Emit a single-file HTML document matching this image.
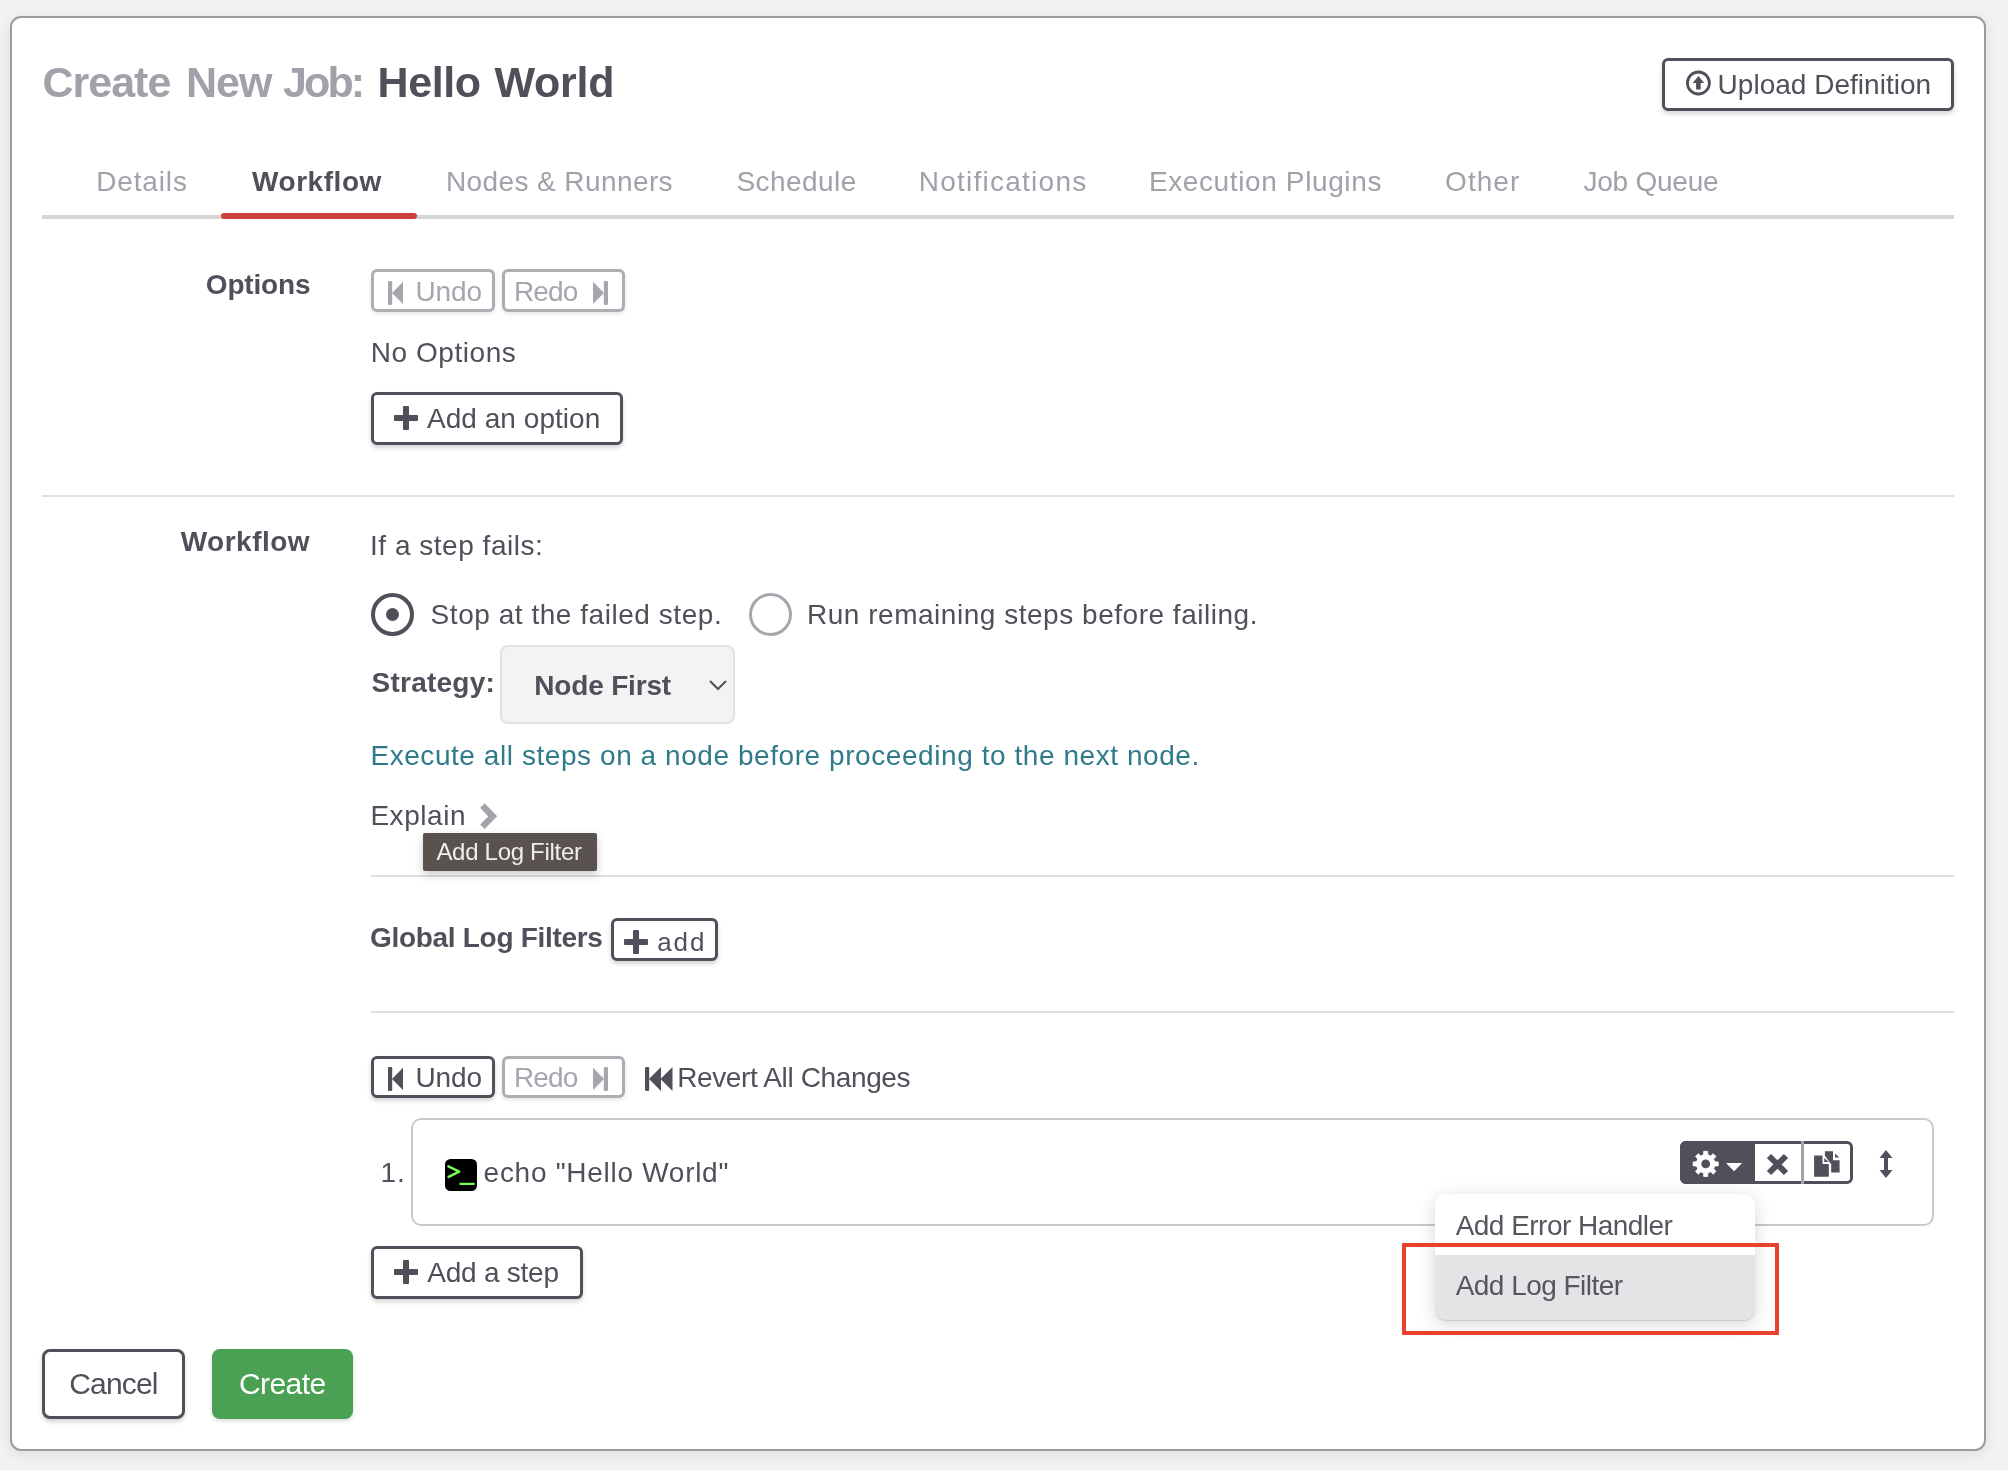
<!DOCTYPE html>
<html><head><meta charset="utf-8"><title>Create New Job</title><style>
*{box-sizing:border-box;margin:0;padding:0}
html,body{width:2008px;height:1470px;overflow:hidden;background:#f2f2f3;font-family:"Liberation Sans",sans-serif}
.t{position:absolute;white-space:pre;line-height:1}
.a{position:absolute}
.card{position:absolute;left:10px;top:16px;width:1976px;height:1435px;border:2px solid #9a9aa2;border-radius:11px;background:#fff;box-shadow:0 3px 14px rgba(0,0,0,.09)}
.btn{position:absolute;border:3px solid #4f5059;border-radius:6px;background:#fff;box-shadow:0 3px 4px rgba(0,0,0,.16)}
.btnd{position:absolute;border:3px solid #adadb3;border-radius:6px;background:#fff;box-shadow:0 2px 4px rgba(0,0,0,.10)}
.sep{position:absolute;height:2px;background:#e0e0e3}
</style></head>
<body>
<div class="card"></div>
<div class="btn" style="left:1662px;top:58px;width:292px;height:53px;"></div>
<svg class="a" style="left:1685px;top:70px" width="27" height="27" viewBox="0 0 27 27"><circle cx="13.4" cy="13.0" r="11" fill="none" stroke="#4f5059" stroke-width="2.8"/><path d="M13.4 5.9 L19.1 12.9 L15.7 12.9 L15.7 19.5 L11.1 19.5 L11.1 12.9 L7.7 12.9 Z" fill="#4f5059"/></svg>
<div class="a" style="left:42px;top:215px;width:1912px;height:4px;background:#d5d5d6"></div>
<div class="a" style="left:221px;top:213px;width:196px;height:6px;background:#cf403b;border-radius:3px"></div>
<div class="btnd" style="left:371px;top:269px;width:124px;height:43px;"></div>
<div class="btnd" style="left:502px;top:269px;width:123px;height:43px;"></div>
<svg class="a" style="left:388px;top:281px" width="16" height="24" viewBox="0 0 16 24"><rect x="0" y="0" width="4.2" height="24" rx="1.3" fill="#a6a7ae"/><path d="M15 0.8 L15 23 L4 11.9 Z" fill="#a6a7ae"/></svg>
<svg class="a" style="left:592px;top:281px" width="16" height="24" viewBox="0 0 16 24"><rect x="11.8" y="0" width="4.2" height="24" rx="1.3" fill="#a6a7ae"/><path d="M1 0.8 L1 23 L12 11.9 Z" fill="#a6a7ae"/></svg>
<div class="btn" style="left:371px;top:392px;width:252px;height:53px;"></div>
<svg class="a" style="left:394px;top:406px" width="24" height="24" viewBox="0 0 24 24"><rect x="9.0" y="0" width="6" height="24" rx="1" fill="#4f5059"/><rect x="0" y="9.0" width="24" height="6" rx="1" fill="#4f5059"/></svg>
<div class="sep" style="left:42px;top:495px;width:1912px;height:2px;"></div>
<div class="a" style="left:371px;top:593px;width:43px;height:43px;border:4.2px solid #4f5059;border-radius:50%"></div>
<div class="a" style="left:386px;top:607.6px;width:13.4px;height:13.4px;background:#4f5059;border-radius:50%"></div>
<div class="a" style="left:749px;top:593px;width:43px;height:43px;border:3.6px solid #a6a7ae;border-radius:50%"></div>
<div class="a" style="left:500px;top:645px;width:235px;height:79px;background:#f3f3f3;border:2px solid #e2e2e5;border-radius:8px"></div>
<svg class="a" style="left:708px;top:678px" width="20" height="14" viewBox="0 0 20 14"><path d="M2 3 L10 11 L18 3" fill="none" stroke="#4f5059" stroke-width="2"/></svg>
<svg class="a" style="left:479px;top:803px" width="20" height="27" viewBox="0 0 20 27"><path d="M5.6 0.3 L18.2 13.2 L5.6 25.9 L1.1 21.5 L9.2 13.4 L1.2 4.8 Z" fill="#a2a3ab"/></svg>
<div class="sep" style="left:371px;top:875px;width:1583px;height:2px;"></div>
<div class="btn" style="left:611px;top:918px;width:107px;height:43px;"></div>
<svg class="a" style="left:624px;top:930px" width="24" height="24" viewBox="0 0 24 24"><rect x="9.0" y="0" width="6" height="24" rx="1" fill="#4f5059"/><rect x="0" y="9.0" width="24" height="6" rx="1" fill="#4f5059"/></svg>
<div class="sep" style="left:371px;top:1011px;width:1583px;height:2px;"></div>
<div class="btn" style="left:371px;top:1056px;width:124px;height:42px;"></div>
<div class="btnd" style="left:502px;top:1056px;width:123px;height:42px;"></div>
<svg class="a" style="left:388px;top:1067px" width="16" height="24" viewBox="0 0 16 24"><rect x="0" y="0" width="4.2" height="24" rx="1.3" fill="#4f5059"/><path d="M15 0.8 L15 23 L4 11.9 Z" fill="#4f5059"/></svg>
<svg class="a" style="left:592px;top:1067px" width="16" height="24" viewBox="0 0 16 24"><rect x="11.8" y="0" width="4.2" height="24" rx="1.3" fill="#a6a7ae"/><path d="M1 0.8 L1 23 L12 11.9 Z" fill="#a6a7ae"/></svg>
<svg class="a" style="left:645px;top:1067px" width="28" height="24" viewBox="0 0 28 24"><rect x="0" y="0" width="4.2" height="24" rx="1.3" fill="#4f5059"/><path d="M16 0 L16 24 L4 12 Z" fill="#4f5059"/><path d="M27.5 0 L27.5 24 L15.5 12 Z" fill="#4f5059"/></svg>
<div class="a" style="left:411px;top:1118px;width:1523px;height:108px;border:2px solid #cbcbc5;border-radius:10px;background:#fff"></div>
<svg class="a" style="left:445px;top:1159px" width="32" height="32" viewBox="0 0 32 32"><rect x="0" y="0" width="32" height="32" rx="5.5" fill="#000"/><path d="M3.4 7.4 L14.2 12.6 L3.6 17.9" fill="none" stroke="#79fb56" stroke-width="2.5" stroke-linecap="round" stroke-linejoin="round"/><path d="M15.3 24.9 L28.8 24.9" stroke="#79fb56" stroke-width="2.2" stroke-linecap="round"/></svg>
<div class="a" style="left:1680px;top:1141px;width:173px;height:43px;border:3px solid #4f5059;border-radius:6px;background:#fff"></div>
<div class="a" style="left:1680px;top:1141px;width:75px;height:43px;background:#4f5059;border-radius:6px 0 0 6px"></div>
<div class="a" style="left:1801px;top:1141px;width:3px;height:43px;background:#a3a4ab"></div>
<svg class="a" style="left:1692px;top:1150px" width="28" height="28" viewBox="0 0 28 28"><path d="M10.22 5.28 L11.61 4.84 L11.71 1.36 L15.69 1.36 L15.79 4.84 L17.33 5.34 L18.63 6.01 L21.16 3.63 L23.97 6.44 L21.59 8.97 L22.32 10.42 L22.76 11.81 L26.24 11.91 L26.24 15.89 L22.76 15.99 L22.26 17.53 L21.59 18.83 L23.97 21.36 L21.16 24.17 L18.63 21.79 L17.18 22.52 L15.79 22.96 L15.69 26.44 L11.71 26.44 L11.61 22.96 L10.07 22.46 L8.77 21.79 L6.24 24.17 L3.43 21.36 L5.81 18.83 L5.08 17.38 L4.64 15.99 L1.16 15.89 L1.16 11.91 L4.64 11.81 L5.14 10.27 L5.81 8.97 L3.43 6.44 L6.24 3.63 L8.77 6.01 Z" fill="#fff" stroke="#fff" stroke-width="0.8" stroke-linejoin="round"/><circle cx="13.7" cy="13.9" r="4.4" fill="#4f5059"/></svg>
<svg class="a" style="left:1726px;top:1163px" width="17" height="9" viewBox="0 0 17 9"><path d="M0 0 L16.2 0 L8.1 8.2 Z" fill="#fff"/></svg>
<svg class="a" style="left:1765px;top:1152px" width="25" height="25" viewBox="0 0 25 25"><path d="M4 4 L21 21 M21 4 L4 21" stroke="#4f5059" stroke-width="6"/></svg>
<svg class="a" style="left:1810px;top:1148px" width="34" height="32" viewBox="0 0 34 32"><path d="M14.9 3.2 L23.0 3.2 L23.0 12.2 L29.6 12.2 L29.6 24.5 L21.2 24.5 L21.2 16.2 L14.9 7.8 Z M25.0 5.4 L29.3 9.4 L25.0 9.4 Z M4.1 7.5 L12.5 7.5 L12.5 16.1 L18.8 16.1 L18.8 28.8 L4.1 28.8 Z M14.3 10.0 L18.7 13.9 L14.3 13.9 Z" fill="#4f5059"/></svg>
<svg class="a" style="left:1879px;top:1150px" width="14" height="28" viewBox="0 0 14 28"><path d="M7 0 L13.5 8 L9 8 L9 20 L13.5 20 L7 28 L0.5 20 L5 20 L5 8 L0.5 8 Z" fill="#4f5059"/></svg>
<div class="btn" style="left:371px;top:1246px;width:212px;height:53px;"></div>
<svg class="a" style="left:394px;top:1260px" width="24" height="24" viewBox="0 0 24 24"><rect x="9.0" y="0" width="6" height="24" rx="1" fill="#4f5059"/><rect x="0" y="9.0" width="24" height="6" rx="1" fill="#4f5059"/></svg>
<div class="a" style="left:1435px;top:1194px;width:320px;height:126px;background:#fff;border-radius:10px;box-shadow:0 4px 18px rgba(0,0,0,.16);overflow:hidden"></div>
<div class="a" style="left:1435px;top:1255px;width:320px;height:64px;background:#e4e4e7;border-radius:0 0 10px 10px;box-shadow:0 2px 1px rgba(0,0,0,.12)"></div>
<div class="a" style="left:423px;top:833px;width:174px;height:38px;background:#59524f;border-radius:2px;box-shadow:0 4px 10px rgba(0,0,0,.2)"></div>
<div class="btn" style="left:42px;top:1349px;width:143px;height:70px;border-radius:8px"></div>
<div class="a" style="left:212px;top:1349px;width:141px;height:70px;background:#4ba153;border-radius:8px;box-shadow:0 2px 4px rgba(0,0,0,.14)"></div>
<div style="position:absolute;left:0;top:0;width:2008px;height:1470px;will-change:transform">
<div class="t" style="left:42.40px;top:61.05px;font-size:43px;font-weight:700;color:#a0a1a9;letter-spacing:-0.987px;">Create</div>
<div class="t" style="left:186.00px;top:61.05px;font-size:43px;font-weight:700;color:#a0a1a9;letter-spacing:-0.934px;">New</div>
<div class="t" style="left:283.00px;top:61.05px;font-size:43px;font-weight:700;color:#a0a1a9;letter-spacing:-2.882px;">Job:</div>
<div class="t" style="left:377.60px;top:61.05px;font-size:43px;font-weight:700;color:#4f5059;letter-spacing:-0.440px;">Hello</div>
<div class="t" style="left:494.60px;top:61.05px;font-size:43px;font-weight:700;color:#4f5059;letter-spacing:-0.289px;">World</div>
<div class="t" style="left:1717.60px;top:71.15px;font-size:28px;font-weight:400;color:#4f5059;letter-spacing:0.015px;">Upload Definition</div>
<div class="t" style="left:96.20px;top:167.95px;font-size:28px;font-weight:400;color:#a0a1a9;letter-spacing:0.852px;">Details</div>
<div class="t" style="left:252.00px;top:167.95px;font-size:28px;font-weight:700;color:#4f5059;letter-spacing:0.557px;">Workflow</div>
<div class="t" style="left:446.00px;top:167.95px;font-size:28px;font-weight:400;color:#a0a1a9;letter-spacing:0.400px;">Nodes &amp; Runners</div>
<div class="t" style="left:736.40px;top:167.95px;font-size:28px;font-weight:400;color:#a0a1a9;letter-spacing:0.445px;">Schedule</div>
<div class="t" style="left:918.80px;top:167.95px;font-size:28px;font-weight:400;color:#a0a1a9;letter-spacing:1.241px;">Notifications</div>
<div class="t" style="left:1148.90px;top:167.95px;font-size:28px;font-weight:400;color:#a0a1a9;letter-spacing:0.620px;">Execution Plugins</div>
<div class="t" style="left:1445.10px;top:167.95px;font-size:28px;font-weight:400;color:#a0a1a9;letter-spacing:1.049px;">Other</div>
<div class="t" style="left:1583.50px;top:167.95px;font-size:28px;font-weight:400;color:#a0a1a9;letter-spacing:-0.240px;">Job Queue</div>
<div class="t" style="left:205.80px;top:270.55px;font-size:28px;font-weight:700;color:#4f5059;letter-spacing:-0.182px;">Options</div>
<div class="t" style="left:415.50px;top:278.45px;font-size:28px;font-weight:400;color:#a6a7ae;letter-spacing:-0.155px;">Undo</div>
<div class="t" style="left:514.00px;top:278.45px;font-size:28px;font-weight:400;color:#a6a7ae;letter-spacing:-0.888px;">Redo</div>
<div class="t" style="left:370.80px;top:339.05px;font-size:28px;font-weight:400;color:#4f5059;letter-spacing:0.548px;">No Options</div>
<div class="t" style="left:427.00px;top:405.25px;font-size:28px;font-weight:400;color:#4f5059;letter-spacing:0.038px;">Add an option</div>
<div class="t" style="left:180.70px;top:528.45px;font-size:28px;font-weight:700;color:#4f5059;letter-spacing:0.486px;">Workflow</div>
<div class="t" style="left:370.00px;top:531.75px;font-size:28px;font-weight:400;color:#4f5059;letter-spacing:0.521px;">If a step fails:</div>
<div class="t" style="left:430.60px;top:601.05px;font-size:28px;font-weight:400;color:#4f5059;letter-spacing:0.541px;">Stop at the failed step.</div>
<div class="t" style="left:807.00px;top:601.05px;font-size:28px;font-weight:400;color:#4f5059;letter-spacing:0.523px;">Run remaining steps before failing.</div>
<div class="t" style="left:371.60px;top:669.15px;font-size:28px;font-weight:700;color:#4f5059;letter-spacing:0.232px;">Strategy:</div>
<div class="t" style="left:534.30px;top:671.75px;font-size:28px;font-weight:700;color:#4f5059;letter-spacing:-0.181px;">Node First</div>
<div class="t" style="left:370.40px;top:742.05px;font-size:28px;font-weight:400;color:#2f7b8b;letter-spacing:0.564px;">Execute all steps on a node before proceeding to the next node.</div>
<div class="t" style="left:370.40px;top:802.25px;font-size:28px;font-weight:400;color:#4f5059;letter-spacing:0.556px;">Explain</div>
<div class="t" style="left:436.40px;top:840.25px;font-size:24px;font-weight:400;color:#eeeeee;letter-spacing:-0.294px;">Add Log Filter</div>
<div class="t" style="left:370.00px;top:923.95px;font-size:28px;font-weight:700;color:#4f5059;letter-spacing:-0.302px;">Global Log Filters</div>
<div class="t" style="left:657.20px;top:928.65px;font-size:26px;font-weight:400;color:#4f5059;letter-spacing:1.940px;">add</div>
<div class="t" style="left:415.50px;top:1063.95px;font-size:28px;font-weight:400;color:#4f5059;letter-spacing:-0.155px;">Undo</div>
<div class="t" style="left:514.00px;top:1063.95px;font-size:28px;font-weight:400;color:#a6a7ae;letter-spacing:-0.888px;">Redo</div>
<div class="t" style="left:677.20px;top:1063.75px;font-size:28px;font-weight:400;color:#4f5059;letter-spacing:-0.372px;">Revert All Changes</div>
<div class="t" style="left:380.60px;top:1159.15px;font-size:28px;font-weight:400;color:#4f5059;letter-spacing:0.828px;">1.</div>
<div class="t" style="left:483.60px;top:1159.15px;font-size:28px;font-weight:400;color:#4f5059;letter-spacing:0.716px;">echo &quot;Hello World&quot;</div>
<div class="t" style="left:427.30px;top:1258.85px;font-size:28px;font-weight:400;color:#4f5059;letter-spacing:-0.245px;">Add a step</div>
<div class="t" style="left:1455.70px;top:1211.55px;font-size:28px;font-weight:400;color:#55565e;letter-spacing:-0.533px;">Add Error Handler</div>
<div class="t" style="left:1455.70px;top:1272.35px;font-size:28px;font-weight:400;color:#55565e;letter-spacing:-0.538px;">Add Log Filter</div>
<div class="t" style="left:69.30px;top:1369.45px;font-size:30px;font-weight:400;color:#4f5059;letter-spacing:-0.864px;">Cancel</div>
<div class="t" style="left:239.00px;top:1369.45px;font-size:30px;font-weight:400;color:#ffffff;letter-spacing:-0.572px;">Create</div>
</div>
<div class="a" style="left:1402px;top:1243px;width:377px;height:92px;border:4.5px solid #e8412c"></div>
</body></html>
